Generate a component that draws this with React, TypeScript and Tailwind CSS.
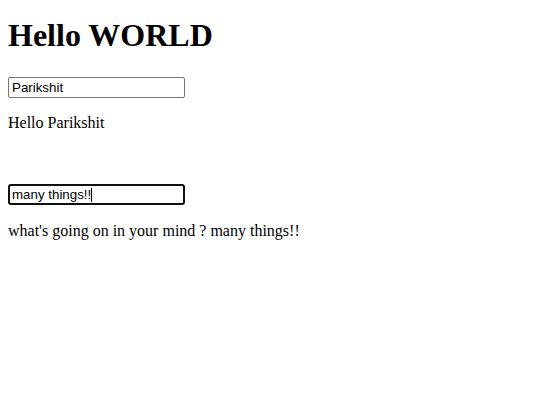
import React, { useState } from 'react';

const App = () => {
    const [name, setName] = useState('Parikshit');
    const [thought, setThought] = useState('many things!!');

    return (
        <div className="min-h-[400px] bg-white px-2 text-black font-['Liberation_Serif',serif]">
            <h1 className="mt-[17px] text-[32px] leading-[37px] font-bold">Hello WORLD</h1>
            <input
                className="mt-[23px] block h-[21px] w-[177px] rounded-[2px] border border-[#767676] px-[3px] text-[13.33px] leading-[15px] outline-none font-['Liberation_Sans',Arial,sans-serif]"
                value={name}
                onChange={(e) => setName(e.target.value)}
            />
            <p className="mt-[16px] text-[16px] leading-[18px]">Hello {name}</p>
            <div className="relative mt-[52px] w-[177px]">
                <input
                    className="block h-[21px] w-[177px] rounded-[3px] border-2 border-[#101010] px-[2px] text-[13.33px] leading-[15px] outline-none font-['Liberation_Sans',Arial,sans-serif]"
                    value={thought}
                    onChange={(e) => setThought(e.target.value)}
                />
                {/* caret */}
                <span className="absolute left-[83px] top-[4px] h-[14px] w-px bg-black" />
            </div>
            <p className="mt-[17px] text-[16px] leading-[18px]">what's going on in your mind ? {thought}</p>
        </div>
    );
};

export default App;
